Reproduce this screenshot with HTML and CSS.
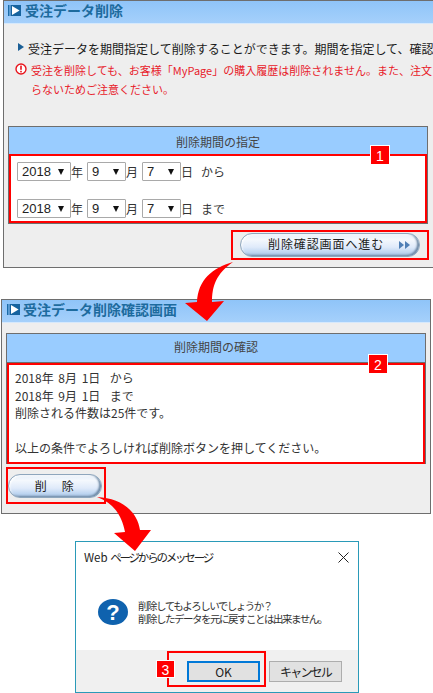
FILE: index.html
```html
<!DOCTYPE html>
<html lang="ja">
<head>
<meta charset="utf-8">
<title>受注データ削除</title>
<link rel="stylesheet" href="styles.css">
</head>
<body>
<div class="page">
  <section class="panel panel-one">
    <h1 class="title">
      <svg class="title-icon" viewBox="0 0 13 11"><rect x="0" y="0" width="1.5" height="11" fill="#1b6ca8"/><rect x="2.5" y="0" width="10.5" height="11" fill="#16639f"/><path d="M4 1 L11.6 5.5 L4 10 Z" fill="#fff"/></svg>
      受注データ削除
    </h1>
    <p class="lead"><span class="lead-mark"></span>受注データを期間指定して削除することができます。期間を指定して、確認</p>
    <div class="warn">
      <svg class="warn-icon" viewBox="0 0 12 12"><circle cx="6" cy="6" r="5" fill="#fff" stroke="#e8141c" stroke-width="1.4"/><rect x="5.2" y="2.6" width="1.6" height="4.2" fill="#e8141c"/><rect x="5.2" y="7.8" width="1.6" height="1.6" fill="#e8141c"/></svg>
      <p class="warn-text">受注を削除しても、お客様「MyPage」の購入履歴は削除されません。また、注文<br>らないためご注意ください。</p>
    </div>
    <div class="table table-one">
      <div class="table-head">削除期間の指定</div>
      <div class="table-body date-body">
        <span class="badge">1</span>
        <div class="date-row">
          <span class="sel sel-year">2018<i></i></span><span class="unit">年</span>
          <span class="sel sel-small">9<i></i></span><span class="unit">月</span>
          <span class="sel sel-small">7<i></i></span><span class="unit">日</span>
          <span class="suffix">から</span>
        </div>
        <div class="date-row">
          <span class="sel sel-year">2018<i></i></span><span class="unit">年</span>
          <span class="sel sel-small">9<i></i></span><span class="unit">月</span>
          <span class="sel sel-small">7<i></i></span><span class="unit">日</span>
          <span class="suffix">まで</span>
        </div>
      </div>
    </div>
    <div class="next-wrap">
      <div class="next-box">
        <button class="pill pill-next">削除確認画面へ進む<span class="pill-arrows"><b></b><b></b></span></button>
      </div>
    </div>
  </section>

  <section class="panel panel-two">
    <h1 class="title">
      <svg class="title-icon" viewBox="0 0 13 11"><rect x="0" y="0" width="1.5" height="11" fill="#1b6ca8"/><rect x="2.5" y="0" width="10.5" height="11" fill="#16639f"/><path d="M4 1 L11.6 5.5 L4 10 Z" fill="#fff"/></svg>
      受注データ削除確認画面
    </h1>
    <div class="table table-two">
      <div class="table-head">削除期間の確認</div>
      <div class="table-body confirm-body">
        <span class="badge">2</span>
        <p class="date-line">2018年 8月 1日&nbsp; から</p>
        <p class="date-line">2018年 9月 1日&nbsp; まで</p>
        <p>削除される件数は25件です。</p>
        <p>&nbsp;</p>
        <p>以上の条件でよろしければ削除ボタンを押してください。</p>
      </div>
    </div>
    <div class="delete-box">
      <button class="pill pill-delete">削　除</button>
    </div>
  </section>

  <section class="dialog">
    <div class="dialog-bar">
      <span class="dialog-title">Web <span class="dialog-title-ja">ページからのメッセージ</span></span>
      <svg class="dialog-close" viewBox="0 0 11 11"><path d="M0.5 0.5 L10.5 10.5 M10.5 0.5 L0.5 10.5" stroke="#222" stroke-width="1" fill="none"/></svg>
    </div>
    <div class="dialog-main">
      <svg class="dialog-icon" viewBox="0 0 30 26"><ellipse cx="15" cy="13" rx="15" ry="13" fill="#0f62ae"/><text x="15" y="21" text-anchor="middle" class="q-mark">?</text></svg>
      <p>削除してもよろしいでしょうか？<br>削除したデータを元に戻すことは出来ません。</p>
    </div>
    <div class="dialog-foot">
      <div class="ok-box">
        <span class="badge badge-ok">3</span>
        <button class="win-btn win-ok">OK</button>
      </div>
      <button class="win-btn win-cancel">キャンセル</button>
    </div>
  </section>

  <svg class="arrows" viewBox="0 0 433 693">
    <path fill="#f00" d="M233 262 C212 268 198 280 197 302 L185 303 L207 321 L224 301 L212 302 C212 286 216 274 233 262 Z"/>
    <path fill="#f00" d="M97 497 C120 498 137 510 140 530 L151 530 L135 551 L114 533 L125 532 C122 516 114 503 97 497 Z"/>
  </svg>
</div>
</body>
</html>
```
FILE: styles.css
```css
* { box-sizing: border-box; }
html, body { margin: 0; padding: 0; background: #fff; }
body { font-family: "Noto Sans CJK JP", "Liberation Sans", sans-serif; font-size: 12px; color: #333; }
p { margin: 0; }
.page { position: relative; width: 433px; height: 693px; overflow: hidden; }

.panel { background: #eee; border: 1px solid #6e6e6e; }
.panel-one { width: 430px; height: 268px; margin-left: 3px; border-right: 0; }
.panel-two { width: 430px; height: 215px; margin: 31px 0 0 1px; }

.title { display: flex; align-items: center; gap: 4px; height: 23px; margin: 0; padding: 0 0 4px 4px; font-size: 14px; line-height: 18px; font-weight: 700; color: #1d6b9e; background: linear-gradient(#8fc4f8, #a5d0fb); border-bottom: 1px solid #d6e9fc; white-space: nowrap; }
.panel-two .title { padding-left: 5px; gap: 3px; }
.title-icon { width: 13px; height: 11px; flex: none; }

.lead { position: relative; margin-top: 16px; padding-left: 24px; height: 18px; line-height: 18px; color: #1a1a1a; white-space: nowrap; }
.lead-mark { position: absolute; left: 14px; top: 3px; border-left: 6px solid #1b5f96; border-top: 4px solid transparent; border-bottom: 4px solid transparent; }

.warn { display: flex; gap: 4px; margin: 3px 0 0 11px; color: #e8202a; }
.warn-icon { width: 12px; height: 12px; margin-top: 2px; flex: none; }
.warn-text { flex: none; line-height: 19px; font-size: 11px; white-space: nowrap; }

.table { background: #fff; border: 1px solid #6e6e6e; position: relative; }
.table-one { width: 420px; height: 98px; margin: 27px 0 0 4px; }
.table-two { width: 420px; height: 131px; margin: 10px 0 0 4px; }
.table-head { height: 28px; padding-top: 2px; line-height: 26px; text-align: center; background: #99ccff; color: #444; border-bottom: 1px solid #6e6e6e; }
.table-two .table-head { height: 29px; padding-top: 0; line-height: 26px; }
.table-body { position: relative; border: 2px solid #f00; margin: 0; }
.badge { position: absolute; right: 35px; top: -11px; width: 20px; height: 20px; line-height: 20px; text-align: center; color: #fff; background: #f00; border: 1px solid #fff; font-family: "Liberation Sans", sans-serif; font-size: 14px; }

.date-body { height: 69px; padding: 6px 0 0 6px; display: flex; flex-direction: column; gap: 18px; margin-top: -1px; }
.date-row { display: flex; align-items: center; height: 19px; color: #333; font-size: 12px; }
.sel { position: relative; display: block; height: 19px; line-height: 17px; padding-left: 4px; background: #fff; border: 1px solid #a9a9a9; border-radius: 1px; font-family: "Liberation Sans", sans-serif; font-size: 13px; color: #222; }
.sel i { position: absolute; right: 6px; top: 6px; width: 0; height: 0; border-left: 3px solid transparent; border-right: 3px solid transparent; border-top: 6px solid #111; }
.sel-year { width: 54px; }
.sel-small { width: 39px; }
.unit { width: 16px; line-height: 16px; }
.suffix { margin-left: 4px; }

.next-wrap { display: flex; justify-content: flex-end; margin-top: 6px; width: 425px; }
.next-box { width: 198px; height: 30px; border: 2px solid #f00; padding: 1px 0 0 7px; }
.pill { display: block; padding: 0; border: 1px solid #8ea6bd; border-radius: 12px; font-family: "Noto Sans CJK JP", sans-serif; font-size: 12px; line-height: 16px; color: #222; background: linear-gradient(#e6eff9 0%, #f4f8fd 25%, #dfeafa 60%, #bcd4f0 85%, #a4c0df 100%); box-shadow: inset -2px -1px 2px #6f8aa6, inset 1px 1px 2px #fff; }
.pill-next { position: relative; width: 180px; height: 24px; text-align: left; padding: 0 0 2px 27px; letter-spacing: 0.9px; }
.pill-arrows { position: absolute; right: 9px; top: 7px; display: flex; gap: 1px; }
.pill-arrows b { width: 0; height: 0; border-left: 5px solid #4f7fb5; border-top: 4px solid transparent; border-bottom: 4px solid transparent; }

.confirm-body { height: 101px; padding: 4px 0 0 6px; font-size: 12px; line-height: 17.6px; color: #333; }
.confirm-body p { white-space: nowrap; }
.date-line { word-spacing: 2px; }

.delete-box { width: 100px; height: 37px; margin: 3px 0 0 4px; border: 2px solid #f00; padding: 5px 0 0 0; }
.pill-delete { width: 94px; height: 24px; letter-spacing: 1.5px; }

.dialog { position: absolute; left: 75px; top: 541px; width: 284px; height: 152px; background: #fff; border: 1px solid #2a9ab8; display: flex; flex-direction: column; color: #222; }
.dialog-bar { display: flex; justify-content: space-between; align-items: center; height: 30px; padding: 0 3px 0 8px; font-size: 12px; color: #222; }
.dialog-title { font-size: 11.5px; white-space: nowrap; }
.dialog-title-ja { letter-spacing: -2.2px; }
.dialog-close { width: 11px; height: 11px; margin-right: 6px; }
.dialog-main { display: flex; align-items: center; gap: 10px; height: 78px; padding: 2px 0 0 22px; color: #333; }
.dialog-main p { font-size: 10.5px; line-height: 13px; letter-spacing: -1.5px; white-space: nowrap; }
.dialog-icon { width: 30px; height: 26px; flex: none; }
.q-mark { fill: #fff; font-family: "Liberation Sans", sans-serif; font-weight: 700; font-size: 22px; }
.dialog-foot { position: relative; flex: 1; display: flex; align-items: center; justify-content: flex-end; padding: 0 16px 0 0; background: #f0f0f0; }
.win-btn { display: block; width: 73px; height: 21px; padding: 0; font-family: "Noto Sans CJK JP", sans-serif; font-size: 12px; line-height: 17px; color: #222; background: #e1e1e1; border: 1px solid #adadad; }
.win-cancel { letter-spacing: -1.8px; }
.win-ok { border: 2px solid #0078d7; width: 73px; }
.ok-box { position: absolute; left: 91px; top: 1px; width: 99px; height: 36px; padding: 8px 0 0 18px; border: 2px solid #f00; }
.badge-ok { left: -13px; right: auto; top: 7px; width: 19px; height: 18px; line-height: 18px; border-width: 1px; }

.arrows { position: absolute; left: 0; top: 0; width: 433px; height: 693px; pointer-events: none; }
```
